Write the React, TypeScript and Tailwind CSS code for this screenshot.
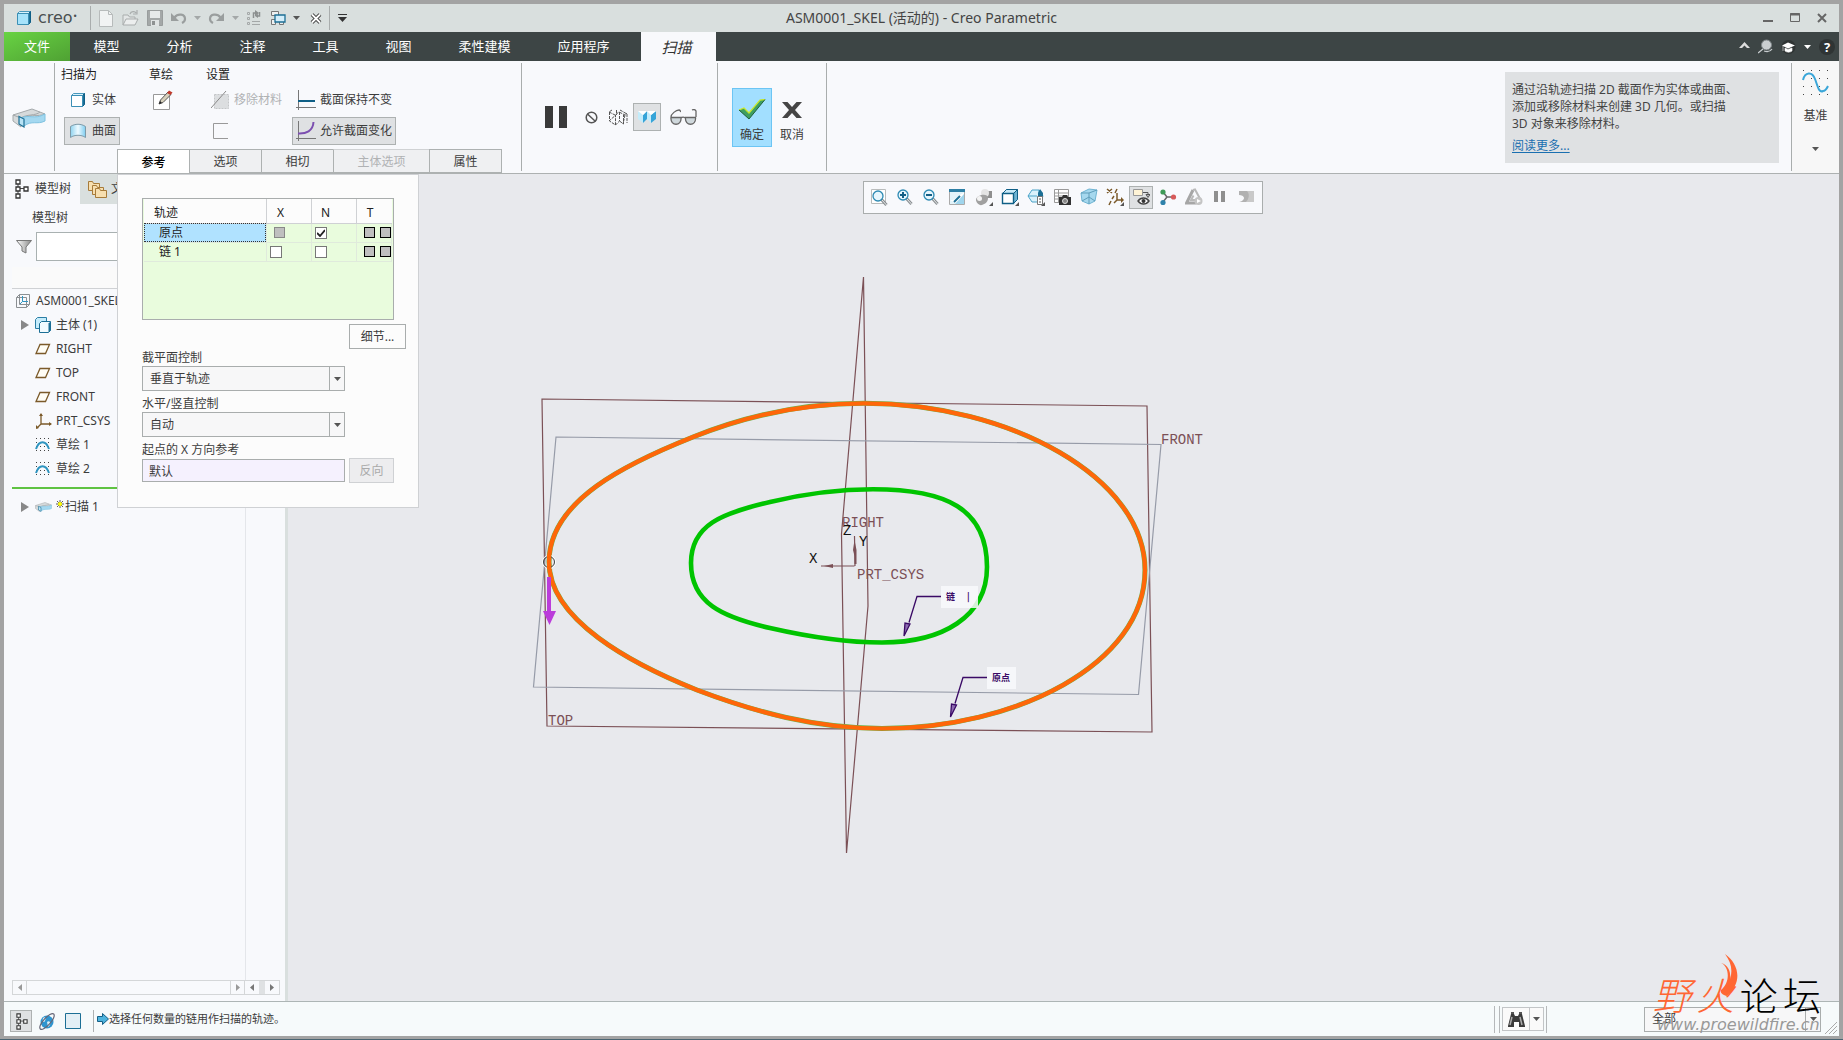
import React from "react";

type Kids = { children?: React.ReactNode };

function Svg({ w, h, className = "", children }: Kids & { w: number; h: number; className?: string }) {
  return (
    <svg width={w} height={h} viewBox={`0 0 ${w} ${h}`} className={`shrink-0 ${className}`} fill="none" aria-hidden="true">
      {children}
    </svg>
  );
}

const Caret = ({ color = "#555" }: { color?: string }) => (
  <Svg w={7} h={4}>
    <path d="M0 0h7L3.5 4z" fill={color} />
  </Svg>
);

const Cube = ({ front = "#fff", w = 16 }: { front?: string; w?: number }) => (
  <Svg w={w} h={16}>
    <path d="M1.5 3.5 3.5 1.5h11l-2 2z" fill="#d9f3fd" stroke="#4a98bb" />
    <path d="m12.5 3.5 2-2v11l-2 2z" fill="#1b6f96" stroke="#0f5f86" />
    <path d="M1.5 3.5h11v11h-11z" fill={front} stroke="#3b8fb5" />
  </Svg>
);

const SweepIcon = ({ w = 34, h = 20 }: { w?: number; h?: number }) => (
  <svg width={w} height={h} viewBox="0 0 34 20" fill="none" className="shrink-0" aria-hidden="true">
    <path d="M1 7 20 1l13 5c-6 3-19 0-24 5v8L1 13z" fill="#d6dadb" stroke="#a4a9ab" />
    <path d="M1 7l8 3c5-4 15-2 19-6" stroke="#a4a9ab" />
    <path d="M9 10c8-4 13 2 24-4v7c-8 4-13-1-21 5z" fill="#9ad4ee" fillOpacity=".9" stroke="#7fc2e0" />
    <path d="M7 8.5 12 11v8l-5-3z" fill="#b9e3f5" stroke="#1c6f95" strokeWidth="1.2" />
  </svg>
);

const TreeGlyph = ({ w = 14, h = 20 }: { w?: number; h?: number }) => (
  <svg width={w} height={h} viewBox="0 0 14 20" fill="none" className="shrink-0" aria-hidden="true">
    <path d="M3 5v10M5 9.5h4" stroke="#444" />
    <path d="M1 1h4v4H1zM1 8h4v4H1zM9 8h4v4H9zM1 15h4v4H1z" fill="#fff" stroke="#333" strokeWidth="1.3" />
  </svg>
);

const PlaneIcon = () => (
  <Svg w={16} h={16}>
    <path d="M5 3.5h9.5l-4 9H1z" fill="#fffdf5" stroke="#7b5a2a" strokeWidth="1.3" />
  </Svg>
);

const CsysIcon = () => (
  <Svg w={18} h={18}>
    <path d="M6 12V2M6 12h10M6 12l-4 4" stroke="#7b5a2a" strokeWidth="1.3" />
    <path d="M4 4l2-3 2 3zM14 10l3 2-3 2zM1 17v-4l3 3z" fill="#7b5a2a" />
  </Svg>
);

const Dots = ({ xs, ys }: { xs: number[]; ys: number[] }) => (
  <>
    {xs.flatMap((x) => ys.map((y) => <rect key={`${x}-${y}`} x={x} y={y} width={1} height={1} fill="#444" />))}
  </>
);

const SketchIcon = () => (
  <Svg w={16} h={14}>
    <Dots xs={[1, 5, 9, 13]} ys={[0, 4, 8, 12]} />
    <path d="M1 11C4 2 11 2 14 11" stroke="#2f95c0" strokeWidth="2" />
  </Svg>
);

const Magnifier = ({ children }: Kids) => (
  <>
    <path d="m10.5 10.5 5 5.5" stroke="#8a8f92" strokeWidth="3" />
    <path d="m11 11 4.5 5" stroke="#e7e9ea" strokeWidth="1" />
    <circle cx="7" cy="7" r="5" fill="#e7f6fd" stroke="#2d8ab3" strokeWidth="1.3" />
    {children}
  </>
);

function QuickButton({ label, className, children }: Kids & { label: string; className: string }) {
  return (
    <button aria-label={label} className={`flex h-6 shrink-0 items-center justify-center ${className}`}>
      {children}
    </button>
  );
}

function TitleBar() {
  return (
    <header className="grid h-7 shrink-0 grid-cols-[1fr_auto_1fr] items-center bg-[#d9dfde] text-[#444]">
      <div className="flex items-center">
        <div className="flex w-[86px] items-center gap-1.5 pl-3">
          <Cube front="#a6e3fb" />
          <span className="font-['DejaVu_Sans',sans-serif] text-base leading-5 text-[#4a4f50]">creo<sup className="text-[8px]">•</sup></span>
        </div>
        <div className="mr-[3px] h-6 w-px bg-[#a9adad]" />
        <QuickButton label="新建" className="w-6">
          <Svg w={14} h={17}><path d="M.5.5h9l4 4v12H.5z" fill="#f1f3f3" stroke="#b7bbbb" /><path d="M9.5.5v4h4" stroke="#b7bbbb" /></Svg>
        </QuickButton>
        <QuickButton label="打开" className="w-6">
          <Svg w={17} h={16}><path d="M1 15V5h5l1.500 2H13v2" stroke="#a9adad" fill="#e3e6e6" /><path d="m1 15 3-6h12l-3 6z" fill="#eceeee" stroke="#a9adad" /><path d="M8 4c1-3 5-3 6-1M15 0v4h-4" stroke="#a9adad" strokeWidth="1.2" /></Svg>
        </QuickButton>
        <QuickButton label="保存" className="w-[25px]">
          <Svg w={16} h={16}><path d="M.5.5h15v15H.5z" fill="#a4a8a8" stroke="#999d9d" /><path d="M3 1h10v7H3z" fill="#e7eaea" /><path d="M4 10h8v6H4z" fill="#dfe3e3" /><path d="M5 11h3v4H5z" fill="#8e9292" /></Svg>
        </QuickButton>
        <QuickButton label="撤消" className="w-6">
          <Svg w={16} h={12}><path d="M3.5 5.5C7 1 14 2 14 7c0 2-1 3-3 4" stroke="#9a9e9e" strokeWidth="2.2" /><path d="M0 1v8h8z" fill="#9a9e9e" /></Svg>
        </QuickButton>
        <QuickButton label="撤消列表" className="w-3"><Caret color="#a4a8a8" /></QuickButton>
        <QuickButton label="重做" className="w-[26px]">
          <Svg w={16} h={12}><path d="M12.5 5.5C9 1 2 2 2 7c0 2 1 3 3 4" stroke="#9a9e9e" strokeWidth="2.2" /><path d="M16 1v8H8z" fill="#9a9e9e" /></Svg>
        </QuickButton>
        <QuickButton label="重做列表" className="w-3"><Caret color="#a4a8a8" /></QuickButton>
        <QuickButton label="重新生成" className="w-[25px]">
          <Svg w={16} h={16}><path d="M1.5 2.5h2v2h-2zM1.5 7.5h2v2h-2zM1.5 12.5h2v2h-2zM6 11.5h8M6 14.5h8" stroke="#a4a8a8" /><path d="M7.500 8V3H10M13.500 2v4H11" stroke="#8c9090" strokeWidth="1.5" /><path d="m9 0 4 3-4 3zM12 4 9 6l3 2z" fill="#8c9090" /></Svg>
        </QuickButton>
        <QuickButton label="窗口" className="w-6">
          <Svg w={17} h={16}><path d="M1.5 1.5h7v4h-7zM1.5 9.5h4v5h-4zM9.5 10.500h4v4h-4z" fill="#eef0f0" stroke="#777" /><path d="M5 5h10v7H5z" fill="#d4eefa" stroke="#1c6f95" strokeWidth="1.3" /></Svg>
        </QuickButton>
        <QuickButton label="窗口列表" className="w-[13px]"><Caret /></QuickButton>
        <QuickButton label="关闭窗口" className="w-[26px]">
          <Svg w={12} h={11}><path d="M2 1.5 10 9.5M10 1.5 2 9.5" stroke="#333" strokeWidth="3.8" /><path d="M2 1.5 10 9.5M10 1.5 2 9.5" stroke="#fff" strokeWidth="1.8" /></Svg>
        </QuickButton>
        <div className="h-6 w-px bg-[#a9adad]" />
        <QuickButton label="自定义" className="w-6">
          <Svg w={9} h={8}><path d="M0 .5h9" stroke="#333" /><path d="M0 3h9L4.5 8z" fill="#333" /></Svg>
        </QuickButton>
      </div>
      <h1 className="text-sm leading-5 text-[#444]">ASM0001_SKEL (活动的) - Creo Parametric</h1>
      <div className="flex items-center justify-end gap-[17px] pr-3">
        <button aria-label="最小化"><Svg w={10} h={10}><path d="M0 8h10" stroke="#666" strokeWidth="2" /></Svg></button>
        <button aria-label="最大化"><Svg w={10} h={10}><path d="M.5.5h9v8h-9z" stroke="#666" /><path d="M0 1.5h10" stroke="#666" strokeWidth="2" /></Svg></button>
        <button aria-label="关闭"><Svg w={10} h={10}><path d="m1 1 8 8M9 1 1 9" stroke="#666" strokeWidth="2" /></Svg></button>
      </div>
    </header>
  );
}

function MenuBar() {
  const tabs = [
    ["模型", "w-[73px]"], ["分析", "w-[73px]"], ["注释", "w-[73px]"], ["工具", "w-[73px]"],
    ["视图", "w-[73px]"], ["柔性建模", "w-[99px]"], ["应用程序", "w-[99px]"],
  ];
  return (
    <nav className="flex h-[29px] shrink-0 items-stretch bg-[#3d4545] text-[13px] text-white">
      <button className="w-[66px] bg-gradient-to-br from-[#68d343] to-[#4fa133]">文件</button>
      {tabs.map(([t, w]) => <button key={t} className={w}>{t}</button>)}
      <button className="ml-2 w-[75px] bg-[#f8f9fc] pr-1 text-[15px] italic text-[#333]">扫描</button>
      <div className="ml-auto flex items-center gap-2 pr-1">
        <button aria-label="折叠功能区" className="-mt-1"><Svg w={11} h={6}><path d="M0 6 5.5 0 11 6H8L5.5 3.5 3 6z" fill="#ddd" /></Svg></button>
        <button aria-label="搜索"><Svg w={15} h={15}><circle cx="8.5" cy="6" r="5" fill="#c9ced0" stroke="#80878a" /><path d="M5 10 0 14M6 12c3 1 6 1 8-2" stroke="#c9ced0" strokeWidth="1.3" /></Svg></button>
        <button aria-label="学习"><Svg w={15} h={14}><circle cx="7.5" cy="7" r="7" fill="#2f3434" /><path d="m1 5.5 6-3 7 3-7 3z" fill="#fff" /><path d="M4 8v3c2 1.5 5 1.5 7 0V8l-4 1.5zM2 6v5" fill="#fff" stroke="#fff" strokeWidth=".6" /></Svg></button>
        <button aria-label="学习列表"><Caret color="#fff" /></button>
        <button aria-label="帮助" className="flex size-4 items-center justify-center rounded-full bg-[#2f3434] text-[13px] font-bold leading-4">?</button>
      </div>
    </nav>
  );
}

const groupHead = "h-[22px] leading-[22px] text-[#222]";
const Sep = () => <div className="my-0.5 w-px shrink-0 bg-[#a9adad]" />;

function Ribbon() {
  const sub = "-ml-px flex items-center justify-center border border-[#adb1b1] bg-[#eff0f2] pt-0.5";
  return (
    <section className="flex h-[113px] shrink-0 border-b border-[#adb1b1] bg-[#f8f9fc]">
      <div className="flex w-[50px] items-center justify-center pt-0.5"><SweepIcon /></div>
      <Sep />
      <div className="flex w-[466px] flex-col">
        <div className="flex h-[88px] pl-1.5 pt-[3px]">
          <div className="w-[88px]">
            <div className={groupHead}>扫描为</div>
            <div className="ml-[3px] flex w-14 flex-col gap-[3px]">
              <button className="flex h-7 items-center gap-1.5 border border-transparent pl-[5px]"><Cube />实体</button>
              <button className="flex h-7 items-center gap-1.5 border border-[#adb1b1] bg-[#dfe1e3] pl-[5px]">
                <Svg w={16} h={16}><path d="M.5 3.5C5 .5 11 .5 15.5 3.5v11c-4-3-11-3-15 0z" fill="url(#srf)" stroke="#7d9aa8" /><defs><linearGradient id="srf"><stop stopColor="#8fd3ef" /><stop offset=".5" stopColor="#eefaff" /><stop offset="1" stopColor="#7fcdf0" /></linearGradient></defs></Svg>
                曲面
              </button>
            </div>
          </div>
          <div className="w-[57px]">
            <div className={groupHead}>草绘</div>
            <button aria-label="草绘" className="flex h-7 items-center pl-1">
              <Svg w={20} h={20}><path d="M.5 4.5h16v15H.5z" fill="#fff" stroke="#999" /><path d="m6 14 1.500-4L15 2l3 2.500-8 8z" fill="#d7d0bb" stroke="#555" /><path d="m14 3 2-2.500 3.500 2L17.500 5z" fill="#c0392b" /><path d="m6 14 1-3 2 2z" fill="#222" /></Svg>
            </button>
          </div>
          <div>
            <div className={groupHead}>设置</div>
            <div className="flex">
              <div className="flex w-[86px] flex-col gap-[3px]">
                <button disabled className="flex h-7 items-center gap-1 pl-[5px] text-[#b0b2b4]">
                  <Svg w={19} h={18}><path d="M3.5 3.5h14v14h-14z" fill="#dcdee0" stroke="#c4c6c8" strokeDasharray="2 1" /><path d="M0 17 15 0" stroke="#8a8a8a" /></Svg>
                  移除材料
                </button>
                <button aria-label="加厚草绘" className="flex h-7 items-center pl-[7px]">
                  <Svg w={16} h={16}><path d="M15 .5H.5v15H15" stroke="#999" /></Svg>
                </button>
              </div>
              <div className="flex w-[104px] flex-col gap-[3px]">
                <button className="flex h-7 items-center gap-1 border border-transparent pl-[3px]">
                  <Svg w={20} h={20}><path d="M2.5 0v20M0 17.5h20" stroke="#777" /><path d="M2 11h17" stroke="#0f5f86" strokeWidth="2" /></Svg>
                  截面保持不变
                </button>
                <button className="flex h-7 items-center gap-1 border border-[#adb1b1] bg-[#dfe1e3] pl-[3px]">
                  <Svg w={20} h={20}><path d="M2.5 0v20M0 17.5h20" stroke="#777" /><path d="M2 12.500C10 13 17 10 17.500 1" stroke="#7c4fb0" strokeWidth="2" /></Svg>
                  允许截面变化
                </button>
              </div>
            </div>
          </div>
        </div>
        <div className="ml-[63px] flex h-6">
          <button className={`${sub} w-[73px] border-b-0 bg-white font-medium text-black`}>参考</button>
          <button className={`${sub} w-[73px]`}>选项</button>
          <button className={`${sub} w-[73px]`}>相切</button>
          <button disabled className={`${sub} w-[97px] border-t-[#d0d2d4] text-[#b0b2b4]`}>主体选项</button>
          <button className={`${sub} w-[73px]`}>属性</button>
        </div>
      </div>
      <Sep />
      <div className="flex w-[195px] items-center gap-0.5 pl-[22px]">
        <button aria-label="暂停" className="mr-2.5 flex"><Svg w={24} h={22}><path d="M1 0h8v22H1zM15 0h8v22h-8z" fill="#3a3a3a" /></Svg></button>
        <button aria-label="无预览" className="flex w-[22px] justify-center"><Svg w={13} h={13}><circle cx="6.5" cy="6.5" r="5.3" stroke="#555" strokeWidth="1.5" /><path d="m2.5 3 8 7.500" stroke="#555" strokeWidth="1.5" /></Svg></button>
        <button aria-label="分离预览" className="flex w-[27px] justify-center"><Svg w={20} h={17}><path d="m1 3 6 3 4-3 6 3 2-2M1.500 3v9l6 4V6M11.500 3v9l-4 4M11.500 12l4 3V6M1 12l8-7M4 1l-3 2M8.500 1v4M12 1l7 4v9M17 6l-2 9" stroke="#555" strokeDasharray="3 1" /></Svg></button>
        <button aria-label="连接预览" className="flex size-7 items-center justify-center border border-[#adb1b1] bg-[#dfe1e3]"><Svg w={20} h={14}><path d="M1 1l5 4v8L1 9z" fill="#c3ecfb" /><path d="m6 5 4-4v8l-4 4z" fill="#36a4d8" /><path d="m10 1 4 4v8l-4-4z" fill="#c3ecfb" /><path d="m14 5 5-4v8l-5 4z" fill="#36a4d8" /><path d="M1 1h9l-4 4zM10 1h9l-5 4z" fill="#fff" /></Svg></button>
        <button aria-label="特征预览" className="ml-[7px] flex"><Svg w={27} h={16}><path d="M1 9c0 8 10 7 10 0zM15 9c0 8 10 7 10 0z" fill="#cfd8dc" /><path d="M1 8.5h10c1 9-11 9-10 0zM15.500 8.500h10c1 9-11 9-10 0zM11 9c1-1 3-1 4.500 0M1 8c0-3 5-7 8-7 1.500 0 1 1.500 2 1.500M26 8V2c-1-2-3-1.500-4-1" stroke="#666" strokeWidth="1.3" /></Svg></button>
      </div>
      <Sep />
      <div className="flex w-[108px] items-center gap-0.5 pl-3.5">
        <button className="flex h-[59px] w-10 flex-col items-center justify-end gap-[7px] border border-[#6cc5f4] bg-[#a2dfff] pb-[3px]">
          <Svg w={28} h={21}><path d="m1 11 5-2 5 5L22 1l5-.5L11 20z" fill="#3e9f62" /><path d="m1 11 5-2 5 5L22 1l5-.5" stroke="#c9e82a" strokeWidth="1.3" /><path d="M27 .5 11 20 1 11" stroke="#1f5f3a" /></Svg>
          <span className="leading-4">确定</span>
        </button>
        <button className="flex h-[59px] w-9 flex-col items-center justify-end gap-[9px] pb-1">
          <Svg w={20} h={16}><path d="M0 0h5.5L10 5l4.500-5H20l-7 8 7 8h-5.500L10 11l-4.500 5H0l7-8z" fill="#454545" /></Svg>
          <span className="leading-4">取消</span>
        </button>
      </div>
      <Sep />
      <aside className="my-[11px] ml-auto mr-3 w-[274px] shrink-0 self-start bg-[#dfe1e3] pb-[9px] pl-[7px] pt-[9px] text-[#444]">
        <p className="whitespace-nowrap leading-[17px]">通过沿轨迹扫描 2D 截面作为实体或曲面、<br />添加或移除材料来创建 3D 几何。或扫描<br />3D 对象来移除材料。</p>
        <a href="#more" className="mt-1.5 inline-block leading-4 text-[#1a6fb0] underline underline-offset-2">阅读更多...</a>
      </aside>
      <Sep />
      <button className="flex w-[47px] flex-col items-center bg-[#f7f7f7] pt-2">
        <Svg w={27} h={27}><Dots xs={[1, 9, 17, 25]} ys={[1, 9, 17, 25]} /><path d="M1 11C3 3 10 2 13 10s4 14 8 12c3 0 4-3 5-5" stroke="#3aa6d8" strokeWidth="2" /></Svg>
        <span className="mt-3 leading-4">基准</span>
        <span className="mt-[23px]"><Caret /></span>
      </button>
    </section>
  );
}

const Expand = () => <Svg w={8} h={10}><path d="M0 0v10l8-5z" fill="#888" /></Svg>;

function TreeRow({ icon, text, open = false, fresh = false }: { icon: React.ReactNode; text: string; open?: boolean; fresh?: boolean }) {
  return (
    <li className="flex h-6 items-center pl-2">
      <span className="flex w-[15px] items-center pl-px">{open && <Expand />}</span>
      <span className="flex w-5 items-center">{icon}</span>
      {fresh && (
        <Svg w={8} h={8} className="ml-px -mt-1.5">
          <path d="M1 1 7 7M7 1 1 7M4 0v8M0 4h8" stroke="#333" strokeWidth=".8" />
          <circle cx="4" cy="4" r="2" fill="#ff0" />
        </Svg>
      )}
      <span className="pl-px">{text}</span>
    </li>
  );
}

function ModelTree() {
  return (
    <aside className="flex w-[281px] shrink-0 flex-col bg-[#f8f9fc]">
      <div className="flex h-[30px] shrink-0 bg-[#d9dfde]">
        <button className="flex w-[76px] items-center gap-1.5 bg-[#f8f9fc] pl-[11px]"><TreeGlyph />模型树</button>
        <button className="flex w-[120px] items-center gap-1 overflow-hidden whitespace-nowrap pl-2">
          <Svg w={19} h={19}>
            {[0, 4, 7].map((d) => <path key={d} d={`M${d + 0.5} ${d + 1.5}h4l1 2h6v7h-11z`} fill="#f7dfb0" stroke="#a77b3a" />)}
          </Svg>
          文件夹浏览器
        </button>
      </div>
      <h2 className="pl-7 pt-[5px] leading-[18px]">模型树</h2>
      <div className="mt-[5px] flex h-[29px] items-center gap-1 pl-3">
        <Svg w={16} h={16}><path d="M.5 1.5h15L10 8v6l-4-2V8z" fill="url(#fn)" stroke="#777" /><defs><linearGradient id="fn"><stop stopColor="#fff" /><stop offset="1" stopColor="#888" /></linearGradient></defs></Svg>
        <input aria-label="筛选模型树" className="h-[29px] w-[200px] border border-[#a9b1b1] bg-white px-1" />
      </div>
      <div className="ml-2 mt-1.5 h-[22px] shrink-0 border-b border-[#cfd1d4] bg-[#fafafa]" />
      <div className="ml-2 flex min-h-0 flex-1">
        <ul className="w-[234px] border-r border-[#e4e6ea]">
          <li className="flex h-6 items-center gap-1.5 pl-1">
            <Svg w={14} h={14}><path d="M.5 3.5h10v10H.5zM3.5.5h10v10h-10zM.5 3.500l3-3M10.500 13.500l3-3" stroke="#8b8f92" /><path d="M6.5 2v5.5H12M6.5 7.5 4 10" stroke="#2f95c0" /></Svg>
            ASM0001_SKEL
          </li>
          <TreeRow open text="主体 (1)" icon={<Svg w={17} h={17}><path d="M.5 2.5 2.5.5h9v9l-2 2h-9z" fill="#c5ecfb" stroke="#2b7ea5" /><path d="M4.5 6.500l2-2h9v9l-2 2h-9z" fill="#f2fbff" stroke="#1c6f95" /><path d="m13.5 6.5 2-2v9l-2 2z" fill="#1c6f95" /></Svg>} />
          <TreeRow text="RIGHT" icon={<PlaneIcon />} />
          <TreeRow text="TOP" icon={<PlaneIcon />} />
          <TreeRow text="FRONT" icon={<PlaneIcon />} />
          <TreeRow text="PRT_CSYS" icon={<CsysIcon />} />
          <TreeRow text="草绘 1" icon={<SketchIcon />} />
          <TreeRow text="草绘 2" icon={<SketchIcon />} />
          <li aria-hidden="true" className="mb-1.5 mt-1.5 h-0.5 bg-[#5fc342]" />
          <TreeRow open fresh text="扫描 1" icon={<SweepIcon w={17} h={12} />} />
        </ul>
      </div>
      <div className="mb-1.5 ml-2 mr-[5px] flex h-[15px] shrink-0 border border-[#d4d6d8]">
        <button aria-label="向左" className="flex w-3.5 items-center justify-center border-r border-[#d4d6d8]"><Svg w={4} h={7}><path d="M4 0v7L0 3.500z" fill="#999" /></Svg></button>
        <div className="flex-1" />
        <button aria-label="向右" className="flex w-[15px] items-center justify-center border-x border-[#d4d6d8]"><Svg w={4} h={7}><path d="M0 0v7l4-3.500z" fill="#999" /></Svg></button>
        <button aria-label="列向左" className="flex w-3.5 items-center justify-center"><Svg w={4} h={7}><path d="M4 0v7L0 3.500z" fill="#777" /></Svg></button>
        <div className="w-1.5 bg-[#dfe1e3]" />
        <button aria-label="列向右" className="flex w-3.5 items-center justify-center"><Svg w={4} h={7}><path d="M0 0v7l4-3.500z" fill="#777" /></Svg></button>
      </div>
    </aside>
  );
}

function Tick({ label, checked = false }: { label: string; checked?: boolean }) {
  return (
    <span className="relative flex size-3">
      <input type="checkbox" aria-label={label} defaultChecked={checked} className="size-3 appearance-none border border-[#777] bg-white" />
      {checked && <span className="pointer-events-none absolute left-0.5 top-0.5"><Svg w={8} h={8}><path d="m0 4 3 3 5-6" stroke="#222" strokeWidth="1.8" /></Svg></span>}
    </span>
  );
}

function Combo({ id, label, value }: { id: string; label: string; value: string }) {
  return (
    <>
      <label htmlFor={id} className="mt-1 block leading-[17px]">{label}</label>
      <div className="relative h-[25px] w-[203px]">
        <select id={id} className="h-[25px] w-full appearance-none border border-[#a9adad] bg-[#f7f7f8] pl-[7px]"><option>{value}</option></select>
        <span className="pointer-events-none absolute inset-y-0 right-0 flex w-4 items-center justify-center border-l border-[#a9adad]"><Caret /></span>
      </div>
    </>
  );
}

function ReferencePanel() {
  const cell = "border-b border-r border-[#e0eadc]";
  const gray = <span className="block size-[11px] border border-black bg-[#bfbfbf]" />;
  return (
    <div className="absolute left-[113px] top-0 z-10 h-[334px] w-[302px] border border-[#cfd1d4] bg-[#fcfcfc] pl-6 pt-[23px]">
      <div className="h-[122px] w-[252px] border border-[#a9adad] bg-[#e9fcdd] px-px">
        <table className="w-full table-fixed border-collapse text-[#222]">
          <colgroup><col className="w-[122px]" /><col className="w-[45px]" /><col className="w-[45px]" /><col /></colgroup>
          <thead>
            <tr className="h-6 bg-[#fcfcfc]">
              <th className="border-b border-r border-[#cfd1d4] pl-2.5 pt-1 text-left font-normal">轨迹</th>
              <th className="border-b border-r border-[#cfd1d4] pr-4 pt-1 font-normal">X</th>
              <th className="border-b border-r border-[#cfd1d4] pr-4 pt-1 font-normal">N</th>
              <th className="border-b border-[#cfd1d4] pr-2 pt-1 font-normal">T</th>
            </tr>
          </thead>
          <tbody>
            <tr className="h-[19px]">
              <td className={`${cell} bg-[#b0e2ff] pl-[15px] leading-4 outline-1 outline-dotted -outline-offset-1 outline-[#333]`}>原点</td>
              <td className={`${cell} pl-[7px]`}><span className="block size-[11px] border border-[#888] bg-[#bfbfbf]" /></td>
              <td className={`${cell} pl-[3px]`}><Tick label="原点 N" checked /></td>
              <td className={`${cell} pl-[7px]`}><span className="flex gap-[5px]">{gray}{gray}</span></td>
            </tr>
            <tr className="h-[19px]">
              <td className={`${cell} pl-[15px] leading-4`}>链 1</td>
              <td className={`${cell} pl-[3px]`}><Tick label="链 1 X" /></td>
              <td className={`${cell} pl-[3px]`}><Tick label="链 1 N" /></td>
              <td className={`${cell} pl-[7px]`}><span className="flex gap-[5px]">{gray}{gray}</span></td>
            </tr>
          </tbody>
        </table>
      </div>
      <button className="ml-[207px] mt-1 block h-[25px] w-[57px] border border-[#a9adad]">细节...</button>
      <div className="-mt-1">
        <Combo id="plane" label="截平面控制" value="垂直于轨迹" />
        <Combo id="horiz" label="水平/竖直控制" value="自动" />
        <label htmlFor="xref" className="mt-1 block leading-[17px]">起点的 X 方向参考</label>
        <div className="flex items-center gap-1">
          <input id="xref" defaultValue="默认" className="h-[23px] w-[203px] border border-[#a9adad] bg-[#f5f1fe] px-1.5" />
          <button disabled className="h-[25px] w-[45px] border border-[#cfd1d4] bg-[#ededef] text-[#aaa]">反向</button>
        </div>
      </div>
    </div>
  );
}

const Corner = () => <path d="M18 14v4h-4z" fill="#555" />;

const VIEW_TOOLS: [string, React.ReactNode][] = [
  ["重新调整", <><path d="M1.5 1.5h14v14h-14z" stroke="#b9bcbc" fill="#fff" /><g transform="translate(1 1)"><Magnifier /></g></>],
  ["放大", <Magnifier><path d="M4 7h6M7 4v6" stroke="#145f86" strokeWidth="2" /></Magnifier>],
  ["缩小", <Magnifier><path d="M4 7h6" stroke="#145f86" strokeWidth="2" /></Magnifier>],
  ["重画", <><path d="M1.5 1.5h15v15h-15z" fill="#e2f3fa" stroke="#aaa" /><path d="M1 1h16v3H1z" fill="#2d7fa5" /><path d="M2 12c6 1 7-5 14-7v2l-8 8z" fill="#fff" /><path d="m8 15 8-9v10H7z" fill="#9fd5ed" /><path d="m6 14 6-6" stroke="#1c6f95" strokeWidth="2" /></>],
  ["渲染", <><path d="M9 3h8v7H9z" fill="#8f8f8f" /><circle cx="10" cy="5" r="4" fill="#e4e4e4" /><path d="M4 8c3-2 9-2 9 2s-3 6-6 7-6-3-6-5 1-3 3-4z" fill="#a0a0a0" /><circle cx="4.500" cy="10.500" r="2.5" fill="#f4f4f4" /><Corner /></>],
  ["显示样式", <><path d="M1.5 5.500l4-4h11v10l-4 4z" fill="#6fb4d3" stroke="#0f5f86" /><path d="m1.5 5.5 4-4h11l-4 4z" fill="#c7e9f7" stroke="#0f5f86" /><path d="M1.5 5.5h11v10h-11z" fill="#fff" stroke="#0f5f86" strokeWidth="1.4" /><Corner /></>],
  ["已保存方向", <><path d="m1 8 4-6h7l4 6-3 6H5z" fill="#d9f1fb" stroke="#4aa3c8" /><path d="M1 8h9M12 2v6" stroke="#4aa3c8" /><path d="m13 1 3 4v4h-5V5z" fill="#1c6f95" /><path d="M10.5 8.5h5v8h-5z" fill="#fff" stroke="#777" /><path d="M12 11h2M12 14h2" stroke="#555" /><Corner /></>],
  ["视图管理器", <><path d="M1.5 1.5h14v13h-14zM1 5h14M1 8h14M1 11h14M5.500 1v13" stroke="#999" fill="#fff" /><path d="M6 9h3l1-2h4l1 2h3v8H6z" fill="#333" /><circle cx="12" cy="13" r="2.5" fill="#888" stroke="#ddd" /></>],
  ["透视图", <><path d="M1 5l8-4 8 1-2 11-6 3-7-3z" fill="#a6d8ee" stroke="#6fb4d3" /><path d="M9 5v11M1 5h8l8-3M2 13l7-4 6 4" stroke="#5e9dba" /></>],
  ["基准显示", <><path d="m1 1 5 4M6 1 1 5M11 1 9 5M8 8l-2 3M5 13l-2 4M11 5v7h6M11 12l-3 3" stroke="#7b5a2a" strokeWidth="1.5" /><path d="m15 9 3 3-3 3z" fill="#7b5a2a" /><Corner /></>],
  ["注释显示", <><path d="M1.5 1.5h9v6h-9z" fill="#fff4d6" stroke="#999" /><path d="M11 4.500h5v3M14 6.500h4l-2 3z" stroke="#555" /><path d="M6 13c3-4 8-4 11 0-3 4-8 4-11 0z" fill="#fff" stroke="#444" strokeWidth="1.4" /><circle cx="11.500" cy="13" r="2" fill="#333" /></>],
  ["旋转中心", <><path d="m4 4 4 5 6 0M8 9l-4 5" stroke="#666" strokeWidth="1.5" /><circle cx="4" cy="4" r="2.6" fill="#3f9b57" /><circle cx="14.500" cy="9" r="2.6" fill="#d65a5a" /><circle cx="4" cy="14.500" r="2.6" fill="#2f82ab" /></>],
  ["仿真", <><path d="M8 2 1.500 15h10" stroke="#a6a6a6" strokeWidth="3" /><path d="m8 2 2-.500 6 11M8.500 7.500 6 12h5" stroke="#b9b9b9" strokeWidth="2" /><circle cx="13.500" cy="13" r="4" fill="#c4c4c4" /><path d="m12 11 4 2-4 2z" fill="#fff" /></>],
  ["暂停仿真", <path d="M3 3h4v11H3zM10 3h4v11h-4z" fill="#8f8f8f" />],
  ["结果", <><path d="M2 3h15v11H2c7-1 7-8 0-7z" fill="#c9c9c9" /><path d="M2 3h8c3 3 2 8-1 11H3c6-2 5-7-1-7z" fill="#b1b1b1" /></>],
];

const OUTER =
  "M549 562C549 500 628 463 693 437C750 414 805 403.3 864 403.3C1010 403.3 1145 478 1145 570C1145 665 1015 728.5 882 728.5C815 728.5 755 712 697 690C632 664 549 620 549 562z";

function Canvas() {
  return (
    <main className="relative flex-1 overflow-hidden bg-[#e8e9ed]">
      <svg viewBox="288 174 1551 827" preserveAspectRatio="xMidYMid meet" className="absolute inset-0 h-full w-full" fill="none">
        <g stroke="#7b5056" strokeWidth="1.2">
          <path d="M542 399 1147 406 1152 732 547 726z" />
          <path d="M863.5 277 868 606 846.5 853 841.5 534z" />
        </g>
        <path d="M556 437 1161 444.5 1138.5 694.5 533.5 687z" stroke="#969ba8" strokeWidth="1.2" />
        <path d="M691 563C691 525 722 513 770 502C808 493 845 489.3 873 489.3C945 489.3 987 508 987 567C987 617 942 642.5 882 642.5C845 642.5 805 636 770 628C722 617 691 603 691 563z" stroke="#00c400" strokeWidth="4.6" />
        <path d={OUTER} stroke="#6fb04a" strokeWidth="5" />
        <path d={OUTER} stroke="#ff6609" strokeWidth="4.2" />
        <path d="M547 577h4v34h5l-6.5 14-6.5-14h4z" fill="#bb3ddb" />
        <circle cx="549" cy="562" r="6.5" stroke="#fff" />
        <circle cx="549" cy="562" r="5.5" stroke="#444" />
        <path d="M549 555v14" stroke="#ff6609" strokeWidth="4" />
        <path d="M854.5 566H821M855 566l-.5-30" stroke="#7b5056" strokeWidth="1.2" />
        <path d="m824 566 9-2v4zM853 550l1.500-10 2 10v14h-2v-8z" fill="#7b5056" />
        <g fontFamily="'Liberation Mono', monospace" fontSize="14" fill="#7b5056">
          <text x="1161" y="444">FRONT</text>
          <text x="842" y="527">RIGHT</text>
          <text x="857" y="579">PRT_CSYS</text>
          <text x="548" y="725">TOP</text>
        </g>
        <g fontFamily="'Liberation Mono', monospace" fontSize="14" fill="#111">
          <text x="809" y="563">X</text>
          <text x="843" y="535">Z</text>
          <text x="859" y="546">Y</text>
        </g>
        <g stroke="#3a0a66" strokeWidth="1.3">
          <path d="M941 596.5h-24l-8 26M987 677.5h-24l-8 26" />
          <path d="m904 636 1-13 5 1zM950.5 717l1-13 5 1z" fill="#8c6ab0" />
        </g>
        <path d="M941 586h37v22h-37zM987 667h29v22h-29z" fill="#f8f9fc" fillOpacity=".85" />
        <g fontFamily="'Noto Sans CJK SC', sans-serif" fontSize="9" fontWeight="700" fill="#3a0a66">
          <text x="946" y="600">链</text>
          <text x="967" y="600">|</text>
          <text x="992" y="681">原点</text>
        </g>
      </svg>
      <div className="relative flex justify-center pr-0.5 pt-[7px]">
        <div role="toolbar" className="flex h-[33px] w-[400px] items-center justify-between border border-[#a9adad] bg-[#f8f9fc] px-[3px] pb-px">
          {VIEW_TOOLS.map(([name, art]) => (
            <button key={name} aria-label={name} className={name === "注释显示" ? "flex h-[23px] w-6 items-center justify-center border border-[#adb1b1] bg-[#dfe1e3]" : "flex h-[23px] w-6 items-center justify-center"}>
              <Svg w={18} h={18}>{art}</Svg>
            </button>
          ))}
        </div>
      </div>
    </main>
  );
}

function StatusBar() {
  return (
    <footer className="relative flex h-[35px] shrink-0 items-center border-t border-[#adb5b5] bg-[#f6fafb]">
      <button aria-label="模型树" className="ml-1.5 mt-1 flex size-[22px] items-center justify-center border border-[#adb1b1] bg-[#dfe1e3] pl-0.5"><TreeGlyph w={12} h={17} /></button>
      <button aria-label="浏览器" className="ml-1.5 mt-1"><Svg w={18} h={17}><circle cx="9" cy="9" r="6.5" fill="#2f95d0" /><path d="M5 5c3-2 3 1 2 3s-3 1-2-3zM9 9c2-2 4 0 3 3l-2 2z" fill="#d8f0f8" /><ellipse cx="9" cy="8.5" rx="10" ry="3.5" transform="rotate(-48 9 8.5)" stroke="#667" strokeWidth="1.2" /></Svg></button>
      <button aria-label="全屏" className="ml-[9px] mt-1"><Svg w={16} h={16}><path d="M.5.5h15v15H.5z" fill="#e3eff5" stroke="#1c6f95" /></Svg></button>
      <div className="ml-3 mt-1 h-[22px] w-px bg-[#adb1b1]" />
      <div className="ml-[3px] flex items-center">
        <Svg w={12} h={12}><path d="M.5 3.5h5v-3l6 5.500-6 5.500v-3h-5z" fill="#4db3dd" stroke="#145f86" /></Svg>
        <span className="text-[11px] leading-4">选择任何数量的链用作扫描的轨迹。</span>
      </div>
      <div className="ml-auto flex items-center gap-1">
        <div className="h-[27px] w-px bg-[#b5b8ba]" />
        <div className="h-[27px] w-px bg-[#b5b8ba]" />
      </div>
      <div className="ml-0.5 flex h-6 w-[42px] border border-[#c2c5c7] bg-[#fafafa]">
        <button aria-label="查找" className="flex flex-1 items-center justify-center"><Svg w={17} h={15}><path d="M0 14 3 2h3l1 2h3l1-2h3l3 12v1h-6v-5H6v5H0z" fill="#3a3a3a" /><path d="m4 5-2 8M12 5l2 8" stroke="#aaa" strokeWidth="1.5" /><path d="M3 0h3v2H3zM11 0h3v2h-3z" fill="#555" /></Svg></button>
        <button aria-label="查找选项" className="flex w-3.5 items-center justify-center border-l border-[#c2c5c7]"><Caret /></button>
      </div>
      <div className="ml-0.5 h-[27px] w-px bg-[#b5b8ba]" />
      <div className="relative ml-[97px] mr-[18px] h-[25px] w-[177px]">
        <select aria-label="选择过滤器" className="h-[25px] w-full appearance-none border border-[#a9adad] bg-[#f7f7f8] pl-[7px]"><option>全部</option></select>
        <span className="pointer-events-none absolute inset-y-0 right-0 flex w-4 items-center justify-center border-l border-[#a9adad]"><Caret /></span>
      </div>
      <div className="absolute bottom-0.5 right-0.5"><Svg w={13} h={13}><path d="M1 13 13 1M5 13l8-8M9 13l4-4" stroke="#aaa" /></Svg></div>
      <div className="pointer-events-none absolute bottom-0.5 right-4 z-20 w-[170px]">
        <div className="relative flex justify-between pr-0.5 font-['Noto_Sans_CJK_SC',sans-serif] text-[38px] font-light leading-[44px]">
          <span className="italic text-[#ff6633]">野</span>
          <span className="italic text-[#ff6633]">火</span>
          <span className="text-black">论</span>
          <span className="text-black">坛</span>
          <span className="absolute -top-[18px] left-[66px]"><Svg w={20} h={42}><path d="M6 0C20 10 24 28 8 42 4 41 1 39 2 36 12 28 10 12 2 9c8 2 10 10 9 16C14 16 12 8 6 0z" fill="#ff6633" /></Svg></span>
        </div>
        <div className="whitespace-nowrap pl-1 font-['DejaVu_Sans',sans-serif] text-base italic leading-[18px] text-[#999]">www.proewildfire.cn</div>
      </div>
    </footer>
  );
}

export default function App() {
  return (
    <div className="h-screen bg-[#4a6472] pb-px">
      <div className="flex h-full flex-col border-4 border-b-[3px] border-[#a3a3a3] font-['Noto_Sans','Noto_Sans_CJK_SC',sans-serif] text-xs text-[#3c3c3c]">
        <TitleBar />
        <MenuBar />
        <Ribbon />
        <div className="relative flex min-h-0 flex-1">
          <ModelTree />
          <div className="w-[3px] shrink-0 bg-[#d9dfde]" />
          <Canvas />
          <ReferencePanel />
        </div>
        <StatusBar />
      </div>
    </div>
  );
}
